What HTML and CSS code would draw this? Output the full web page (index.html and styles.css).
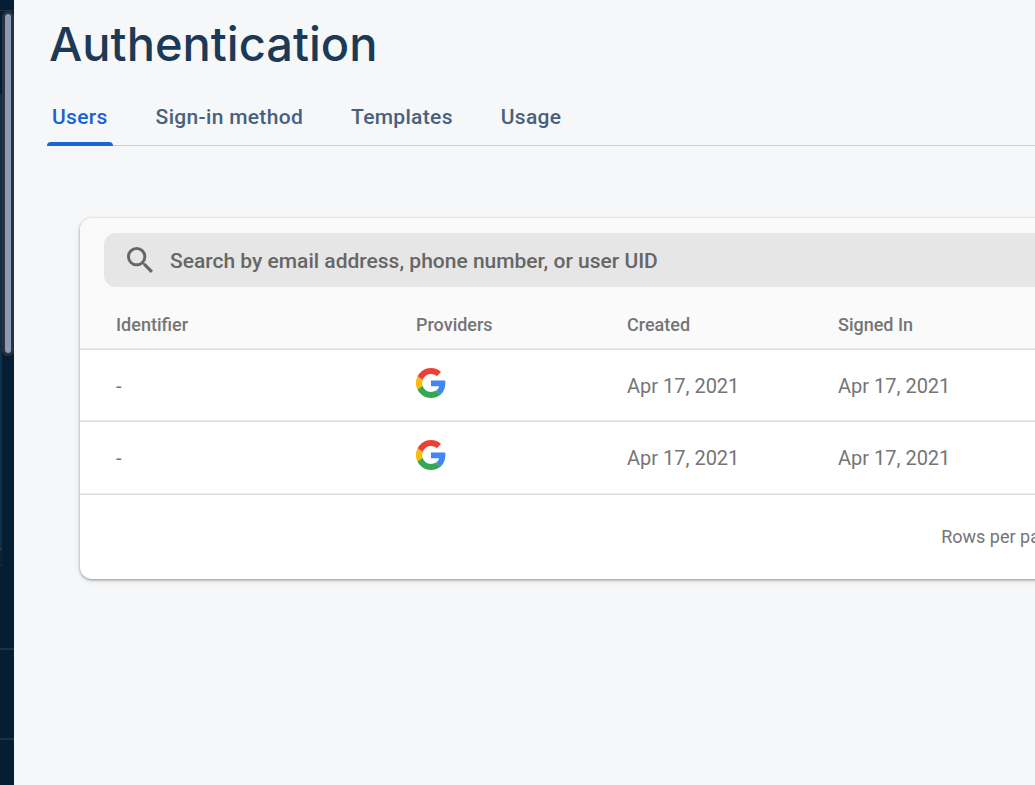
FILE: index.html
```html
<!DOCTYPE html>
<html lang="en">
<head>
<meta charset="utf-8">
<title>Authentication</title>
<link rel="stylesheet" href="styles.css">
</head>
<body>
<svg class="defs" aria-hidden="true">
  <symbol id="google" viewBox="0 0 48 48">
    <path fill="#EA4335" d="M24 9.5c3.54 0 6.71 1.22 9.21 3.6l6.85-6.85C35.9 2.38 30.47 0 24 0 14.62 0 6.51 5.38 2.56 13.22l7.98 6.19C12.43 13.72 17.74 9.5 24 9.5z"/>
    <path fill="#4285F4" d="M46.98 24.55c0-1.57-.15-3.09-.38-4.55H24v9.02h12.94c-.58 2.96-2.26 5.48-4.78 7.18l7.73 6c4.51-4.18 7.09-10.36 7.09-17.65z"/>
    <path fill="#FBBC05" d="M10.53 28.59c-.48-1.45-.76-2.99-.76-4.59s.27-3.14.76-4.59l-7.98-6.19C.92 16.46 0 20.12 0 24c0 3.88.92 7.54 2.56 10.78l7.97-6.19z"/>
    <path fill="#34A853" d="M24 48c6.48 0 11.93-2.13 15.89-5.81l-7.73-6c-2.15 1.45-4.92 2.3-8.16 2.3-6.26 0-11.57-4.22-13.47-9.91l-7.98 6.19C6.51 42.62 14.62 48 24 48z"/>
  </symbol>
</svg>
<div class="app">
  <aside class="sidebar">
    <div class="side-head"></div>
    <div class="side-overview"></div>
    <div class="side-group"></div>
    <div class="side-gap"></div>
    <div class="side-more"></div>
    <div class="side-plan"></div>
    <div class="scroll-thumb"></div>
  </aside>
  <main class="main">
    <h1 class="title">Authentication</h1>
    <nav class="tabs">
      <a class="tab tab-active" href="#users">Users</a>
      <a class="tab" href="#method">Sign-in method</a>
      <a class="tab" href="#templates">Templates</a>
      <a class="tab" href="#usage">Usage</a>
    </nav>
    <section class="card">
      <div class="toolbar">
        <label class="search">
          <svg class="search-icon" viewBox="3 3 17.5 17.5" role="img" aria-label="Search"><path fill="currentColor" d="M15.5 14h-.79l-.28-.27A6.471 6.471 0 0 0 16 9.5 6.5 6.5 0 1 0 9.5 16c1.61 0 3.09-.59 4.23-1.57l.27.28v.79l5 4.99L20.49 19l-4.99-5zm-6 0C7.01 14 5 11.99 5 9.5S7.01 5 9.5 5 14 7.01 14 9.5 11.99 14 9.5 14z"/></svg>
          <input class="search-input" type="text" placeholder="Search by email address, phone number, or user UID">
        </label>
      </div>
      <table class="users">
        <colgroup><col class="col-id"><col class="col-mid"><col class="col-mid"><col></colgroup>
        <thead>
          <tr><th>Identifier</th><th>Providers</th><th>Created</th><th>Signed In</th></tr>
        </thead>
        <tbody>
          <tr><td>-</td><td><svg class="google" role="img" aria-label="Google"><use href="#google"/></svg></td><td>Apr 17, 2021</td><td>Apr 17, 2021</td></tr>
          <tr><td>-</td><td><svg class="google" role="img" aria-label="Google"><use href="#google"/></svg></td><td>Apr 17, 2021</td><td>Apr 17, 2021</td></tr>
        </tbody>
      </table>
      <div class="pager">Rows per page:</div>
    </section>
  </main>
</div>
</body>
</html>
```
FILE: styles.css
```css
* { box-sizing: border-box; }
body {
  margin: 0;
  font-family: Roboto, sans-serif;
  background: #f6f7f9;
  color: #757575;
}
.defs { position: absolute; width: 0; height: 0; }
.app { display: flex; min-height: 100vh; }

.sidebar {
  position: relative;
  flex: 0 0 14px;
  display: flex;
  flex-direction: column;
  background: #051e34;
}
.side-head { height: 11px; border-bottom: 1px solid #1e3549; }
.side-overview { height: 83px; }
.side-group { width: 2px; height: 456px; background: #122f48; border-bottom: 1px solid #2b4258; }
.side-gap { width: 2px; height: 16px; border-bottom: 1px solid #1e3549; background: #0a2339; }
.side-more { height: 84px; border-bottom: 2px solid #1a3146; }
.side-plan { height: 90px; border-bottom: 2px solid #1a3146; }
.scroll-thumb {
  position: absolute;
  top: 11px;
  left: 2px;
  width: 12px;
  height: 345px;
  border: 3px solid #293241;
  border-radius: 6px;
  background: #8c9bb3;
}

.main { flex: 1; min-width: 0; overflow: hidden; }
.title {
  margin: 14px 0 0 35px;
  font: 500 47px/60px "Google Sans", Inter, sans-serif;
  color: #1c3a57;
}
.tabs {
  display: flex;
  gap: 38px;
  margin: 11px 0 0 33px;
  border-bottom: 1px solid #c6cfda;
}
.tab {
  position: relative;
  padding: 4px 5px 0;
  font-size: 21px;
  font-weight: 500;
  line-height: 56px;
  letter-spacing: 0.015em;
  color: #48617f;
  text-decoration: none;
}
.tab-active { color: #1a62d4; }
.tab-active::after {
  content: "";
  position: absolute;
  left: 0;
  right: 0;
  bottom: -1px;
  height: 4px;
  border-radius: 4px 4px 0 0;
  background: #1967d2;
}

.card {
  margin: 72px -68px 0 66px;
  border-radius: 12px;
  background: #fff;
  box-shadow: 0 1px 3px rgba(0, 0, 0, 0.4), 0 2px 8px rgba(0, 0, 0, 0.06);
}
.toolbar {
  padding: 15px 24px 12px;
  background: #fafafa;
  border-radius: 12px 12px 0 0;
}
.search {
  display: flex;
  align-items: center;
  gap: 17px;
  height: 54px;
  padding: 0 23px;
  border-radius: 12px;
  background: #e6e6e6;
  color: #666;
}
.search-icon { width: 26px; height: 26px; }
.search-input {
  flex: 1;
  border: 0;
  padding: 2px 0 0;
  outline: 0;
  background: none;
  font: 500 21px/28px Roboto, sans-serif;
  color: #666;
}
.search-input::placeholder { color: #666; opacity: 1; }

.users { width: 100%; border-collapse: separate; border-spacing: 0; table-layout: fixed; }
.col-id { width: 336px; }
.col-mid { width: 211px; }
.users th, .users td {
  padding: 0;
  text-align: left;
  border-bottom: 1px solid #dcdcdc;
  box-shadow: inset 0 -1px #ebebeb;
}
.users th:first-child, .users td:first-child { padding-left: 36px; }
.users th {
  height: 51px;
  background: #fafafa;
  font-size: 18px;
  font-weight: 500;
  color: #757575;
}
.users td { height: 72px; font-size: 20px; }
.users tr:last-child td { height: 73px; }
.google { display: block; width: 30px; height: 30px; margin-bottom: 6px; }
.pager {
  display: flex;
  align-items: center;
  justify-content: flex-end;
  height: 84px;
  padding: 0 39px 2px;
  font-size: 18px;
}
```
